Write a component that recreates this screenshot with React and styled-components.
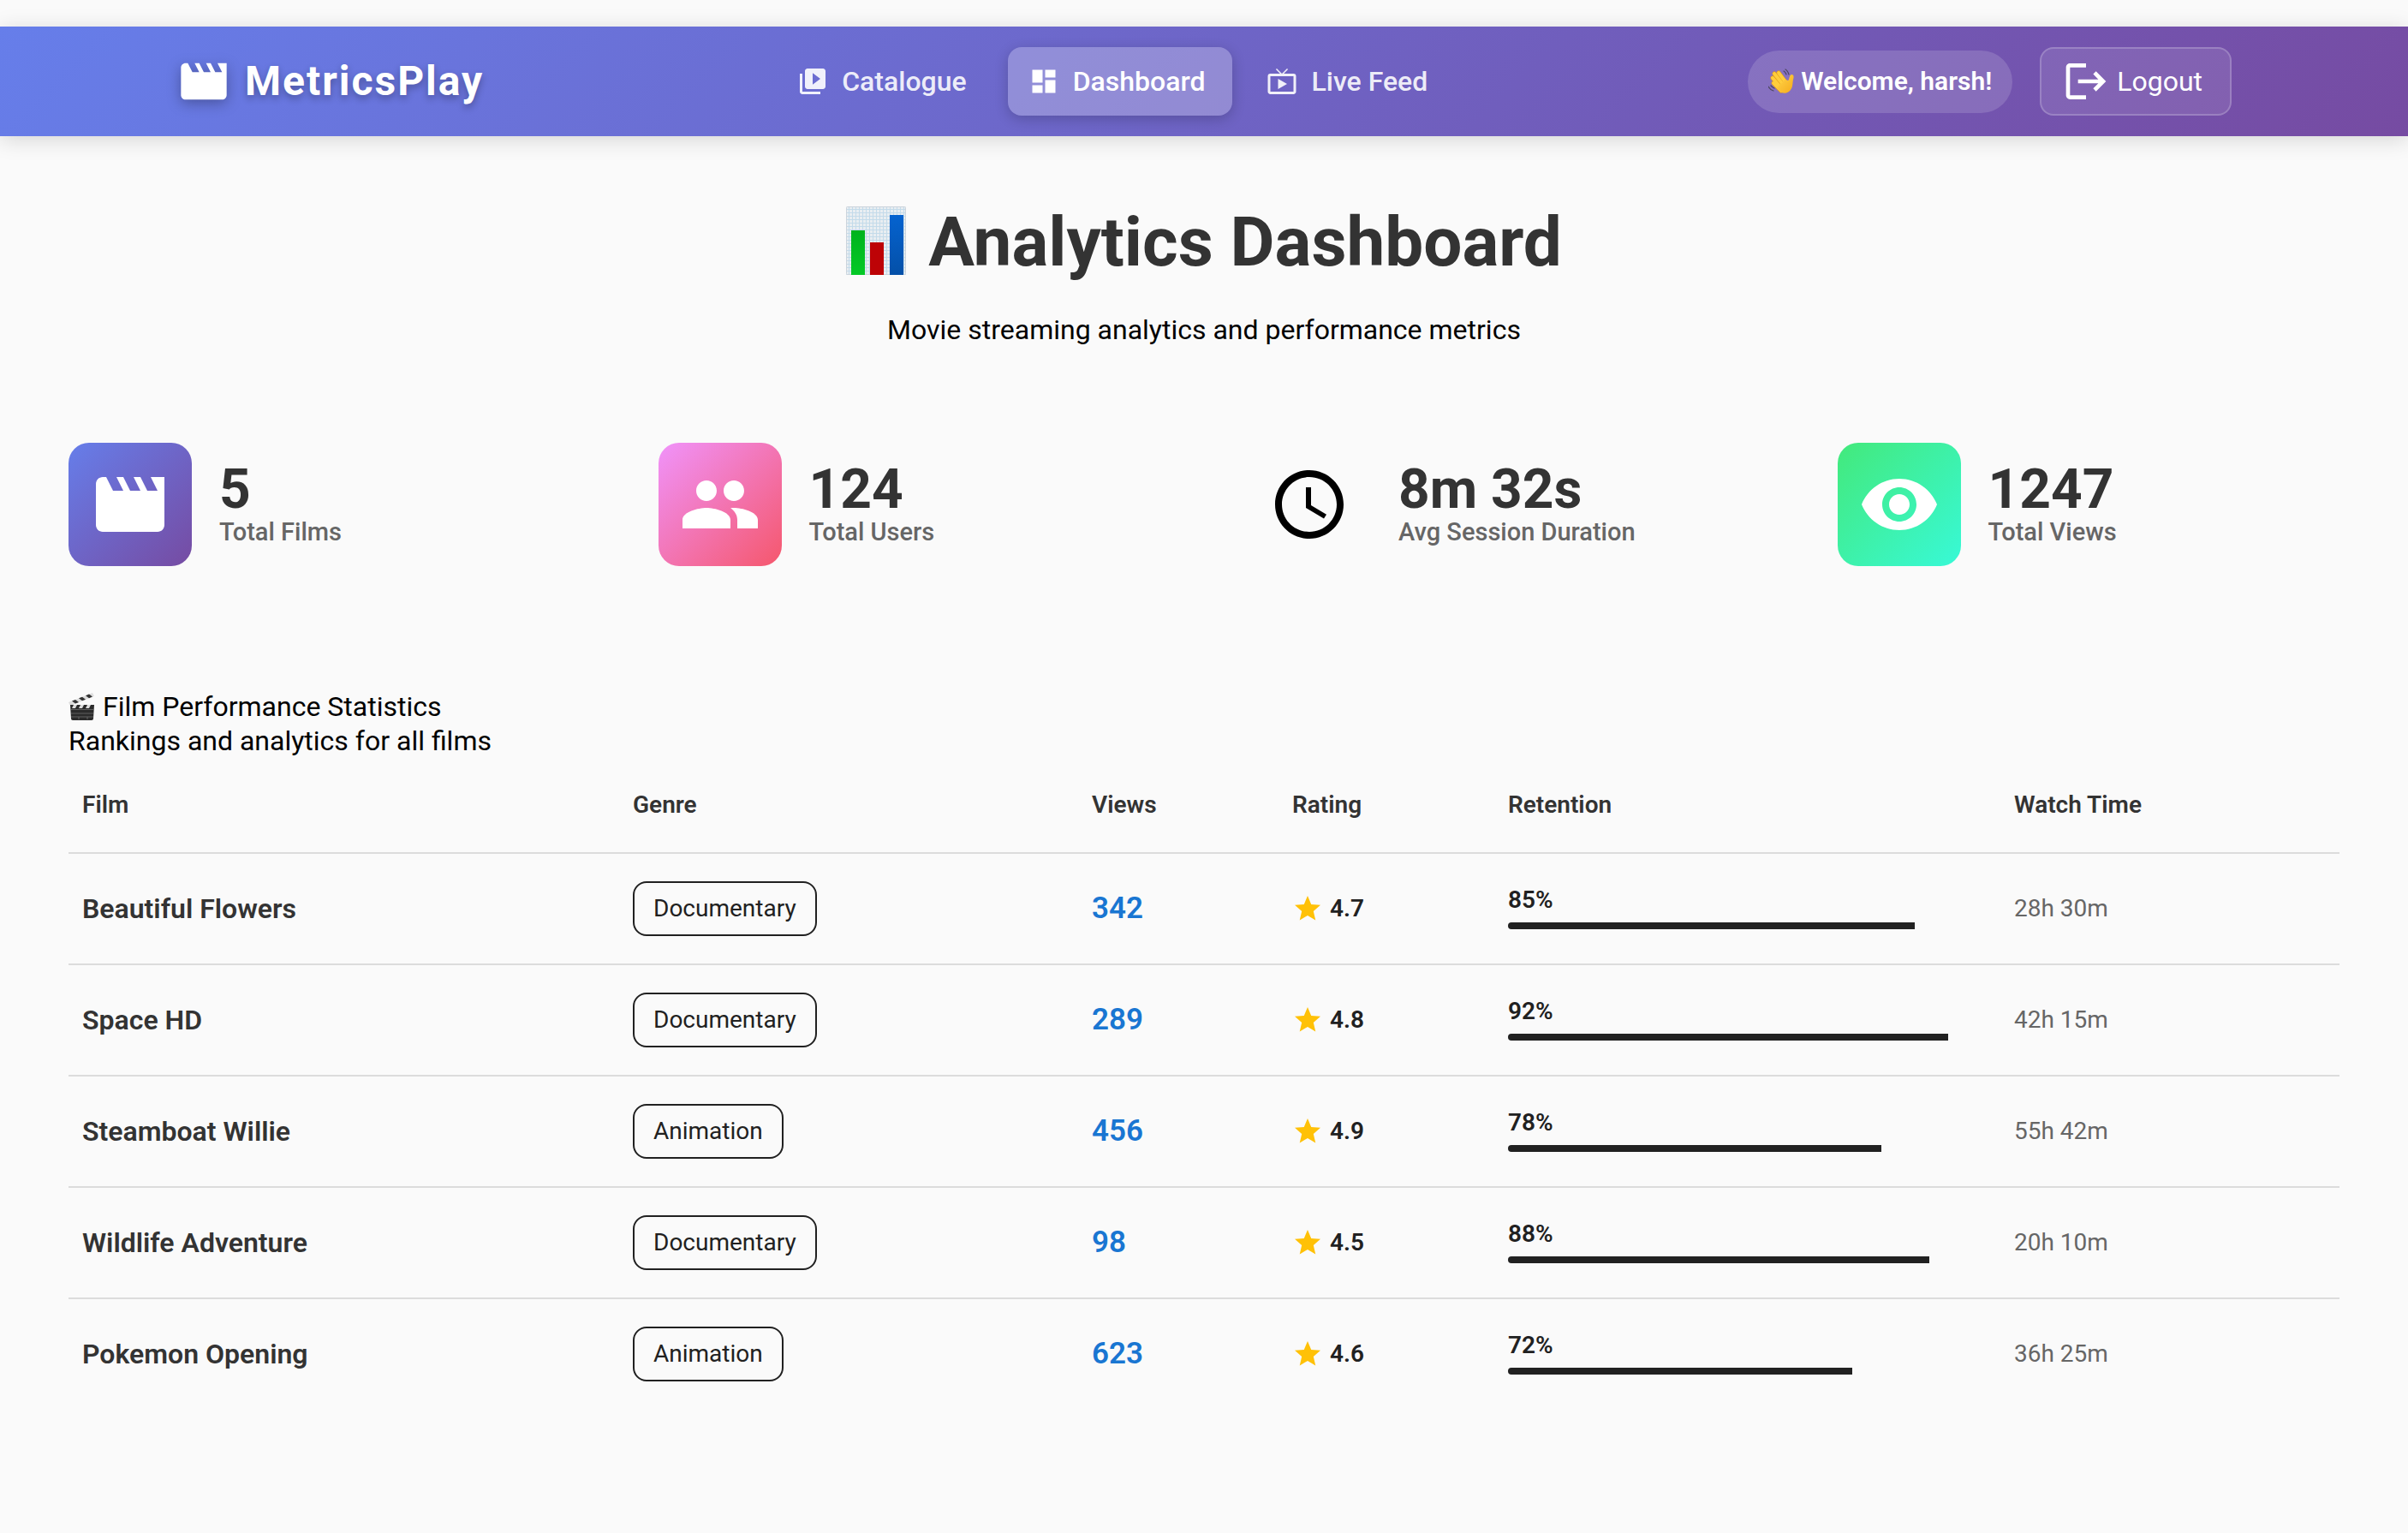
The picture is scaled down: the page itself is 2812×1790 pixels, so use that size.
import React from "react";
import styled, { createGlobalStyle } from "styled-components";
import {
  MdMovie,
  MdVideoLibrary,
  MdDashboard,
  MdLiveTv,
  MdLogout,
  MdPeople,
  MdAccessTime,
  MdVisibility,
  MdStar,
} from "react-icons/md";

const GlobalStyle = createGlobalStyle`
  * { box-sizing: border-box; }
  body {
    margin: 0;
    background: #fafafa;
    color: #000;
    font-family: Roboto, "Liberation Sans", sans-serif;
    font-size: 32px;
    line-height: 40px;
  }
`;

const Header = styled.header`
  margin-top: 31px;
  padding: 24px 48px;
  background: linear-gradient(135deg, #667eea 0%, #764ba2 100%);
  box-shadow: 0 4px 24px rgba(0, 0, 0, 0.15);
`;

const HeaderInner = styled.div`
  display: flex;
  align-items: center;
  justify-content: space-between;
  max-width: 2400px;
  height: 80px;
  margin: 0 auto;
  color: #fff;
`;

const Brand = styled.a`
  display: flex;
  align-items: center;
  gap: 16px;
  color: #fff;
  font-size: 48px;
  font-weight: 700;
  letter-spacing: 2px;
  text-decoration: none;
  text-shadow: 0 4px 8px rgba(0, 0, 0, 0.3);

  svg {
    width: 64px;
    height: 64px;
    filter: drop-shadow(0 4px 8px rgba(0, 0, 0, 0.3));
  }
`;

const Nav = styled.nav`
  display: flex;
  gap: 16px;
`;

const NavLink = styled.a`
  display: flex;
  align-items: center;
  gap: 16px;
  height: 80px;
  padding: 0 32px 0 24px;
  border-radius: 16px;
  background: ${(p) => (p.$active ? "rgba(255, 255, 255, 0.25)" : "transparent")};
  box-shadow: ${(p) => (p.$active ? "0 4px 16px rgba(0, 0, 0, 0.2)" : "none")};
  color: ${(p) => (p.$active ? "#fff" : "rgba(255, 255, 255, 0.9)")};
  font-weight: 500;
  text-decoration: none;

  svg {
    width: 36px;
    height: 36px;
  }
`;

const Account = styled.div`
  display: flex;
  align-items: center;
  gap: 32px;
`;

const Welcome = styled.span`
  display: flex;
  align-items: center;
  gap: 8px;
  height: 73px;
  padding: 0 24px;
  border-radius: 40px;
  background: rgba(255, 255, 255, 0.15);
  font-size: 30px;
  font-weight: 600;

  svg {
    width: 30px;
    height: 30px;
  }
`;

const LogoutButton = styled.button`
  display: flex;
  align-items: center;
  gap: 8px;
  height: 80px;
  padding: 0 32px 0 24px;
  border: 2px solid rgba(255, 255, 255, 0.2);
  border-radius: 16px;
  background: rgba(255, 255, 255, 0.1);
  color: #fff;
  font: inherit;

  svg {
    width: 56px;
    height: 56px;
  }
`;

const Main = styled.main`
  padding: 68px 80px;
`;

const Intro = styled.section`
  display: flex;
  flex-direction: column;
  align-items: center;
  gap: 26px;
  text-align: center;
`;

const Title = styled.h1`
  display: flex;
  align-items: center;
  gap: 26px;
  margin: 0;
  color: #333;
  font-size: 80px;
  font-weight: 700;
  line-height: 112px;

  svg {
    width: 70px;
    height: 80px;
    margin-bottom: 4px;
  }
`;

const Subtitle = styled.p`
  margin: 0;
`;

const Stats = styled.section`
  display: grid;
  grid-template-columns: repeat(4, 1fr);
  column-gap: 102px;
  margin-top: 112px;
`;

const Stat = styled.article`
  display: flex;
  align-items: center;
  gap: 32px;
`;

const StatIcon = styled.div`
  display: flex;
  align-items: center;
  justify-content: center;
  width: 144px;
  height: 144px;
  border-radius: 24px;
  background: ${(p) => p.$background};
  color: ${(p) => p.$color};

  svg {
    width: 96px;
    height: 96px;
  }
`;

const StatValue = styled.div`
  color: #333;
  font-size: 64px;
  font-weight: 700;
  line-height: 64px;
`;

const StatLabel = styled.div`
  color: #666;
  font-size: 29px;
  font-weight: 500;
  line-height: 34px;
`;

const Films = styled.section`
  margin-top: 144px;
`;

const FilmsTitle = styled.h2`
  display: flex;
  align-items: center;
  gap: 8px;
  margin: 0;
  font-size: 32px;
  font-weight: 400;

  svg {
    width: 32px;
    height: 32px;
  }
`;

const Table = styled.table`
  width: 100%;
  table-layout: fixed;
  border-collapse: separate;
  border-spacing: 0;
  color: #212121;
  font-size: 28px;
  text-align: left;
`;

const Column = styled.col`
  width: ${(p) => p.$width}px;
`;

const HeadCell = styled.th`
  height: 112px;
  padding: 0 16px;
  border-bottom: 2px solid #dcdcdc;
  color: #333;
  font-weight: 600;
`;

const Cell = styled.td`
  height: 130px;
  padding: 0 16px;
  border-bottom: 2px solid #dcdcdc;

  tr:last-child > & {
    border-bottom-color: transparent;
  }
`;

const FilmCell = styled(Cell)`
  color: #333;
  font-size: 32px;
  font-weight: 600;
`;

const ViewsCell = styled(Cell)`
  color: #1976d2;
  font-size: 35px;
  font-weight: 600;
`;

const TimeCell = styled(Cell)`
  color: #666;
`;

const Genre = styled.span`
  display: inline-flex;
  align-items: center;
  height: 64px;
  padding: 0 22px;
  border: 2px solid #212121;
  border-radius: 16px;
  vertical-align: middle;
`;

const Rating = styled.div`
  display: flex;
  align-items: center;
  gap: 8px;
  font-weight: 600;

  svg {
    width: 36px;
    height: 36px;
    color: #ffc107;
  }
`;

const Retention = styled.div`
  display: flex;
  flex-direction: column;
  gap: 12px;
  font-weight: 600;
  line-height: 28px;
`;

const Meter = styled.div`
  height: 8px;
  border-radius: 4px;
  overflow: hidden;
`;

const MeterFill = styled.div`
  height: 100%;
  background: #212121;
`;

function WaveIcon() {
  return (
    <svg viewBox="0 0 30 30" role="img" aria-label="Waving hand">
      <defs>
        <linearGradient id="skin" x1="0" y1="0" x2="1" y2="1">
          <stop stopColor="#ffd54a" />
          <stop offset="1" stopColor="#f5ab1c" />
        </linearGradient>
      </defs>
      <path
        d="M12 5l9 12M7 6l12 15M5 11l12 14M6 17l9 9"
        fill="none"
        stroke="#e09a1a"
        strokeWidth="5"
        strokeLinecap="round"
      />
      <path
        d="M12 5l9 12M7 6l12 15M5 11l12 14M6 17l9 9"
        fill="none"
        stroke="#ffcd3c"
        strokeWidth="3.8"
        strokeLinecap="round"
      />
      <path
        d="M20 13l3 1c2-1 1-6 4-7 3 0 3 3 2 6-1 5 0 10-5 14-4 3-9 2-12-2l-2-3z"
        fill="url(#skin)"
      />
      <path
        d="M20 1c2 1 3 3 4 6M18 3c2 1 2 2 3 4M0 21c1 2 3 4 6 5M3 20c1 1 2 2 4 3"
        fill="none"
        stroke="#4d4760"
        strokeWidth="1.2"
        strokeLinecap="round"
      />
    </svg>
  );
}

function ChartIcon() {
  return (
    <svg viewBox="0 0 70 80" role="img" aria-label="Bar chart">
      <defs>
        <pattern id="grid" width="4" height="4" patternUnits="userSpaceOnUse">
          <rect width="4" height="4" fill="#e9eef2" />
          <path d="M0 3.5h4M3.5 0v4" stroke="#c4dbea" strokeWidth="1" />
        </pattern>
        <linearGradient id="green" x2="0" y2="1">
          <stop stopColor="#00b31c" />
          <stop offset="1" stopColor="#04c927" />
        </linearGradient>
        <linearGradient id="blue" x2="0" y2="1">
          <stop stopColor="#0563d0" />
          <stop offset="1" stopColor="#0450a8" />
        </linearGradient>
      </defs>
      <rect width="70" height="80" rx="1" fill="url(#grid)" />
      <rect x="0.5" y="0.5" width="69" height="79" rx="1" fill="none" stroke="#ccd4dc" />
      <rect x="6" y="28" width="16" height="52" fill="url(#green)" />
      <rect x="28" y="42" width="16" height="38" fill="#bd0306" />
      <rect x="51" y="10" width="16" height="70" fill="url(#blue)" />
    </svg>
  );
}

function ClapperIcon() {
  return (
    <svg viewBox="0 0 32 32" role="img" aria-label="Clapper board">
      <path d="M0 11L28 0l2 4L2 15z" fill="#ddd" />
      <path d="M4 9.500l4 3 4-1.600-4-3zM12 6.300l4 3 4-1.600-4-3zM20 3.200l4 3 4-1.600-4-3z" fill="#333" />
      <path d="M2 14h28l-1 16q0 2-2 2H5q-2 0-2-2z" fill="#2b2b2b" />
      <path d="M6 14h4l-2 4H4zM14 14h4l-2 4h-4zM22 14h4l-2 4h-4z" fill="#ddd" />
      <path d="M3 19.500h26M3 24h26M3 28h26M12 28v3M22 28v3" stroke="#777" strokeWidth="0.700" />
    </svg>
  );
}

const navItems = [
  { label: "Catalogue", Icon: MdVideoLibrary },
  { label: "Dashboard", Icon: MdDashboard, active: true },
  { label: "Live Feed", Icon: MdLiveTv },
];

const stats = [
  { value: "5", label: "Total Films", Icon: MdMovie, background: "linear-gradient(135deg, #667eea, #764ba2)" },
  { value: "124", label: "Total Users", Icon: MdPeople, background: "linear-gradient(135deg, #f093fb, #f5576c)" },
  { value: "8m 32s", label: "Avg Session Duration", Icon: MdAccessTime, background: "transparent", color: "#000" },
  { value: "1247", label: "Total Views", Icon: MdVisibility, background: "linear-gradient(135deg, #43e97b, #38f9d7)" },
];

const columns = [
  { label: "Film", width: 643 },
  { label: "Genre", width: 536 },
  { label: "Views", width: 234 },
  { label: "Rating", width: 252 },
  { label: "Retention", width: 591 },
  { label: "Watch Time", width: 396 },
];

const films = [
  { name: "Beautiful Flowers", genre: "Documentary", views: 342, rating: "4.7", retention: 85, time: "28h 30m" },
  { name: "Space HD", genre: "Documentary", views: 289, rating: "4.8", retention: 92, time: "42h 15m" },
  { name: "Steamboat Willie", genre: "Animation", views: 456, rating: "4.9", retention: 78, time: "55h 42m" },
  { name: "Wildlife Adventure", genre: "Documentary", views: 98, rating: "4.5", retention: 88, time: "20h 10m" },
  { name: "Pokemon Opening", genre: "Animation", views: 623, rating: "4.6", retention: 72, time: "36h 25m" },
];

export default function App() {
  return (
    <>
      <GlobalStyle />
      <Header>
        <HeaderInner>
          <Brand href="#home">
            <MdMovie />
            MetricsPlay
          </Brand>
          <Nav>
            {navItems.map(({ label, Icon, active }) => (
              <NavLink key={label} href={`#${label}`} $active={active}>
                <Icon />
                {label}
              </NavLink>
            ))}
          </Nav>
          <Account>
            <Welcome>
              <WaveIcon />
              Welcome, harsh!
            </Welcome>
            <LogoutButton type="button">
              <MdLogout />
              Logout
            </LogoutButton>
          </Account>
        </HeaderInner>
      </Header>
      <Main>
        <Intro>
          <Title>
            <ChartIcon />
            Analytics Dashboard
          </Title>
          <Subtitle>Movie streaming analytics and performance metrics</Subtitle>
        </Intro>
        <Stats>
          {stats.map(({ value, label, Icon, background, color = "#fff" }) => (
            <Stat key={label}>
              <StatIcon $background={background} $color={color}>
                <Icon />
              </StatIcon>
              <div>
                <StatValue>{value}</StatValue>
                <StatLabel>{label}</StatLabel>
              </div>
            </Stat>
          ))}
        </Stats>
        <Films>
          <FilmsTitle>
            <ClapperIcon />
            Film Performance Statistics
          </FilmsTitle>
          <Subtitle>Rankings and analytics for all films</Subtitle>
          <Table>
            <colgroup>
              {columns.map(({ label, width }) => (
                <Column key={label} $width={width} />
              ))}
            </colgroup>
            <thead>
              <tr>
                {columns.map(({ label }) => (
                  <HeadCell key={label} scope="col">{label}</HeadCell>
                ))}
              </tr>
            </thead>
            <tbody>
              {films.map((film) => (
                <tr key={film.name}>
                  <FilmCell>{film.name}</FilmCell>
                  <Cell>
                    <Genre>{film.genre}</Genre>
                  </Cell>
                  <ViewsCell>{film.views}</ViewsCell>
                  <Cell>
                    <Rating>
                      <MdStar />
                      {film.rating}
                    </Rating>
                  </Cell>
                  <Cell>
                    <Retention>
                      {film.retention}%
                      <Meter>
                        <MeterFill style={{ width: `${film.retention}%` }} />
                      </Meter>
                    </Retention>
                  </Cell>
                  <TimeCell>{film.time}</TimeCell>
                </tr>
              ))}
            </tbody>
          </Table>
        </Films>
      </Main>
    </>
  );
}
